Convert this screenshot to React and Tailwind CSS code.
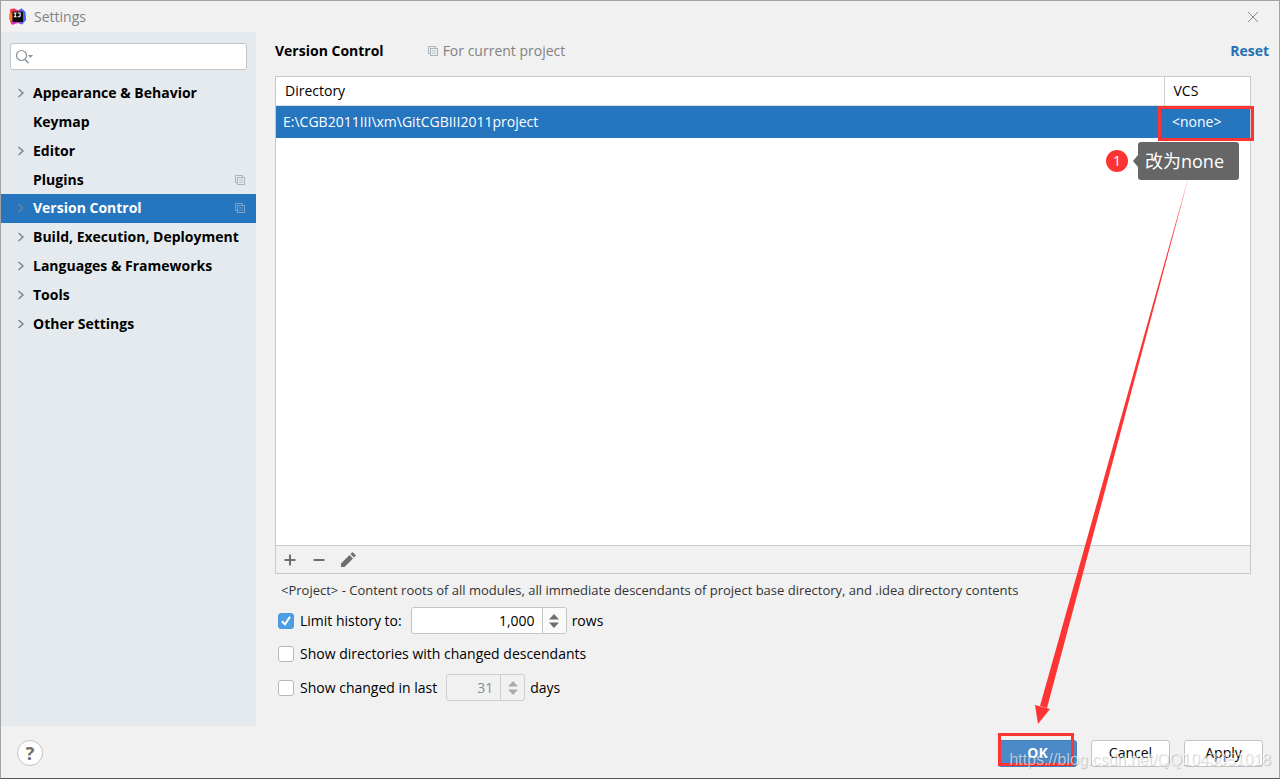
import React from "react";

const nav = [
  { label: "Appearance & Behavior", arrow: true },
  { label: "Keymap" },
  { label: "Editor", arrow: true },
  { label: "Plugins", copy: true },
  { label: "Version Control", arrow: true, copy: true, active: true },
  { label: "Build, Execution, Deployment", arrow: true },
  { label: "Languages & Frameworks", arrow: true },
  { label: "Tools", arrow: true },
  { label: "Other Settings", arrow: true },
];

function Logo() {
  return (
    <svg className="size-[18px]" viewBox="0 0 18 18" aria-hidden="true">
      <defs>
        <linearGradient id="lg" x1="0" y1="0" x2="1" y2="0">
          <stop offset="0" stopColor="#fc801d" />
          <stop offset="0.35" stopColor="#f8316f" />
          <stop offset="0.7" stopColor="#6b57ff" />
          <stop offset="1" stopColor="#2c6cf5" />
        </linearGradient>
      </defs>
      <path d="M1 1.500 5 .5 9 2.500 12.500.3 16.500 4 17 12 13 16.500 8.500 15 3.500 16.800 1.500 15 .3 10z" fill="url(#lg)" />
      <path d="M.3 6v5.500l3 1V6z" fill="#fc801d" />
      <path d="M1.500 12.500 3 16.800 8 15V13z" fill="#d62fc4" />
      <path d="M1 1.500 5 .5 9 2.500V4H3v3z" fill="#fb2f5d" />
      <rect x="3.500" y="3.500" width="10.500" height="10.500" fill="#0b0b0b" />
      <path d="M4.800 5h2.800M6.200 5v4M4.800 8.800h2.800M8.800 5h2.300v2.900q0 .9-1 .9H8.600" fill="none" stroke="#fff" strokeWidth="1.100" />
    </svg>
  );
}

function CopyIcon({ className }) {
  return (
    <svg className={`size-3 shrink-0 ${className}`} viewBox="0 0 12 12" fill="none" stroke="currentColor" aria-hidden="true">
      <path d="M3 8.500H1.500v-7h7V3" />
      <rect x="3.500" y="3.500" width="7" height="7" />
      <path d="M5 5.500h4M5 7h4M5 8.500h4" strokeOpacity="0.5" />
    </svg>
  );
}

function Spinner({ label, value, disabled, width }) {
  return (
    <span className={`flex h-[27px] overflow-hidden rounded-[3px] border ${disabled ? "border-[#cfcfcf] text-[#8c8c8c]" : "border-[#c4c4c4] bg-white text-black"}`}>
      <input aria-label={label} defaultValue={value} disabled={disabled} className={`${width} bg-transparent pr-[7px] text-right outline-none`} />
      <button type="button" disabled={disabled} aria-label={`Adjust ${label}`} className={`flex w-6 items-center justify-center border-l ${disabled ? "border-[#cfcfcf] text-[#ababab]" : "border-[#c4c4c4] bg-[#fafafa] text-[#6e6e6e]"}`}>
        <svg className="h-4 w-3" viewBox="0 0 12 16" fill="currentColor" aria-hidden="true">
          <path d="M6 1l5 5.500H1zM6 15l5-5.500H1z" />
        </svg>
      </button>
    </span>
  );
}

function Check({ id, checked }) {
  return (
    <span className="grid size-4 shrink-0">
      <input id={id} type="checkbox" defaultChecked={checked} className="peer col-start-1 row-start-1 size-4 appearance-none rounded-[3px] border border-[#b8b8b8] bg-white checked:border-[#4a98e0] checked:bg-[#4f9ee3]" />
      <svg className="pointer-events-none invisible col-start-1 row-start-1 size-4 peer-checked:visible" viewBox="0 0 16 16" fill="none" stroke="#fff" strokeWidth="2" aria-hidden="true">
        <path d="M3.800 8.200 7 11.200l5-7.500" />
      </svg>
    </span>
  );
}

export default function App() {
  return (
    <div className="relative flex min-h-screen flex-col overflow-hidden border border-[#a3a3a3] border-b-[#555] bg-[#f1f1f1] font-['Open_Sans','Noto_Sans_CJK_SC',sans-serif] text-sm text-black">
      <header className="flex h-[31px] items-center gap-[7px] pr-5 pl-2">
        <Logo />
        <h1 className="flex-1 text-[#828282]">Settings</h1>
        <button type="button" aria-label="Close">
          <svg className="size-3" viewBox="0 0 12 12" stroke="#8a8a8a" aria-hidden="true">
            <path d="M1 1l10 10M11 1 1 11" />
          </svg>
        </button>
      </header>

      <div className="flex flex-1">
        <aside className="w-[255px] shrink-0 bg-[#e5eaee]">
          <div className="mx-[9px] mt-[11px] mb-[9px] flex h-[27px] items-center rounded-[3px] border border-[#c4c4c4] bg-white pl-1">
            <svg className="h-4 w-5 shrink-0" viewBox="0 0 20 16" fill="none" stroke="#8b9299" strokeWidth="1.200" aria-hidden="true">
              <circle cx="6.500" cy="6.500" r="5" />
              <path d="M10 10.500 13.500 14" strokeWidth="1.600" />
              <path d="M13 6h5l-2.500 3z" fill="#8b9299" stroke="none" />
            </svg>
            <input aria-label="Search settings" className="min-w-0 flex-1 bg-transparent outline-none" />
          </div>
          <nav className="grid h-[259px] auto-rows-fr">
            {nav.map((n) => (
              <a key={n.label} href="#" className={`flex items-center pr-[10px] pl-4 font-bold ${n.active ? "bg-[#2675bf] text-white" : ""}`}>
                <span className="w-4 shrink-0">
                  {n.arrow && (
                    <svg className="h-[10px] w-2" viewBox="0 0 8 10" fill="none" stroke={n.active ? "#6f8296" : "#7f8285"} strokeWidth="1.400" aria-hidden="true">
                      <path d="M1.500 1 6 5 1.500 9" />
                    </svg>
                  )}
                </span>
                <span className="flex-1 whitespace-nowrap">{n.label}</span>
                {n.copy && <CopyIcon className={n.active ? "text-[#7fa3c7]" : "text-[#aab5be]"} />}
              </a>
            ))}
          </nav>
        </aside>

        <main className="flex min-w-0 flex-1 flex-col pr-[28px] pl-[19px]">
          <div className="-mr-[18px] flex h-[44px] items-center pb-[6px]">
            <h2 className="font-bold">Version Control</h2>
            <p className="ml-[43px] flex flex-1 items-center gap-1 text-[#828282]">
              <CopyIcon className="text-[#aab5be]" />
              For current project
            </p>
            <a href="#" className="font-bold text-[#2470b3]">Reset</a>
          </div>

          <section className="flex h-[498px] flex-col border border-[#c9c9c9] bg-white">
            <table className="w-full table-fixed border-collapse text-left">
              <colgroup>
                <col />
                <col className="w-[86px]" />
              </colgroup>
              <thead>
                <tr className="h-[28px] border-b border-[#dcdcdc]">
                  <th className="pl-[9px] font-normal">Directory</th>
                  <th className="border-l border-[#d0d0d0] pl-[9px] font-normal">VCS</th>
                </tr>
              </thead>
              <tbody>
                <tr className="h-[33px] bg-[#2675bf] text-white">
                  <td className="pl-[7px]">E:\CGB2011III\xm\GitCGBIII2011project</td>
                  <td className="pl-2">&lt;none&gt;</td>
                </tr>
              </tbody>
            </table>
            <div className="mt-auto flex h-[28px] items-center gap-[13px] border-t border-[#c9c9c9] bg-[#f1f1f1] pl-[6px] text-[#6e6e6e]">
              <button type="button" aria-label="Add">
                <svg className="size-4" viewBox="0 0 16 16" stroke="currentColor" strokeWidth="2" aria-hidden="true"><path d="M2.500 8h11M8 2.500v11" /></svg>
              </button>
              <button type="button" aria-label="Remove">
                <svg className="size-4" viewBox="0 0 16 16" stroke="currentColor" strokeWidth="2" aria-hidden="true"><path d="M2.500 8h11" /></svg>
              </button>
              <button type="button" aria-label="Edit">
                <svg className="size-4" viewBox="0 0 16 16" fill="currentColor" aria-hidden="true"><path d="M1 15v-3.500L9.500 3 13 6.500 4.500 15zM10.500 2 12 .5q.5-.5 1 0L15.500 3q.5.500 0 1L14 5.500z" /></svg>
              </button>
            </div>
          </section>

          <p className="mt-1 pl-[6px] text-[13px] leading-6 text-[#333]">
            &lt;Project&gt; - Content roots of all modules, all immediate descendants of project base directory, and .idea directory contents
          </p>
          <div className="mt-[5px] flex flex-col gap-[7px] pl-[3px]">
            <div className="flex h-[27px] items-center">
              <Check id="limit" checked />
              <label htmlFor="limit" className="mr-[9px] ml-[6px]">Limit history to:</label>
              <Spinner label="History rows" value="1,000" width="w-[130px]" />
              <span className="ml-[5px]">rows</span>
            </div>
            <div className="flex h-[26px] items-center">
              <Check id="dirs" />
              <label htmlFor="dirs" className="ml-[6px]">Show directories with changed descendants</label>
            </div>
            <div className="flex h-[27px] items-center">
              <Check id="last" />
              <label htmlFor="last" className="mr-[9px] ml-[6px]">Show changed in last</label>
              <Spinner label="Days" value="31" width="w-[53px]" disabled />
              <span className="ml-[5px]">days</span>
            </div>
          </div>
        </main>
      </div>

      <footer className="flex h-[52px] items-center gap-[14px] pt-[2px] pr-4 pl-4">
        <button type="button" aria-label="Help" className="mr-auto size-[26px] rounded-full border border-[#c4c4c4] bg-white text-lg leading-none font-bold text-[#6e6e6e]">?</button>
        <button type="button" className="h-[27px] w-[79px] rounded-[3px] border border-[#4280be] bg-[#4b89c8] font-bold text-white">OK</button>
        <button type="button" className="h-[27px] w-[79px] rounded-[3px] border border-[#c4c4c4] bg-white">Cancel</button>
        <button type="button" className="h-[27px] w-[79px] rounded-[3px] border border-[#c4c4c4] bg-white">Apply</button>
      </footer>

      <div className="pointer-events-none absolute top-[105px] right-[25px] h-[35px] w-[96px] border-3 border-[#fc3434]" />
      <div className="pointer-events-none absolute right-[205px] bottom-[12px] h-[33px] w-[76px] border-3 border-[#fc3434]" />
      <svg className="pointer-events-none absolute top-[171px] right-[85px] h-[553px] w-[160px]" viewBox="0 0 160 553" aria-hidden="true">
        <path d="M156 0 13 536 6 534z" fill="#fc3434" />
        <path d="M1 533 16 537 4 552z" fill="#fc3434" />
      </svg>
      <div className="pointer-events-none absolute top-[141px] right-[40px] flex items-center">
        <span className="mr-[5px] flex size-[22px] items-center justify-center rounded-full bg-[#fc3434] text-white">1</span>
        <svg className="h-3 w-[5px]" viewBox="0 0 5 12" aria-hidden="true"><path d="M5 0v12L0 6z" fill="#666" /></svg>
        <span className="flex h-[38px] w-[101px] items-center rounded-[3px] bg-[#666] pl-[7px] text-lg text-white">改为none</span>
      </div>
      <span className="pointer-events-none absolute right-2 bottom-[6px] font-['Liberation_Sans',sans-serif] text-base text-white/60 [text-shadow:1px_1px_1px_rgba(0,0,0,0.2)]">https://blog.csdn.net/QQ1043051018</span>
    </div>
  );
}
